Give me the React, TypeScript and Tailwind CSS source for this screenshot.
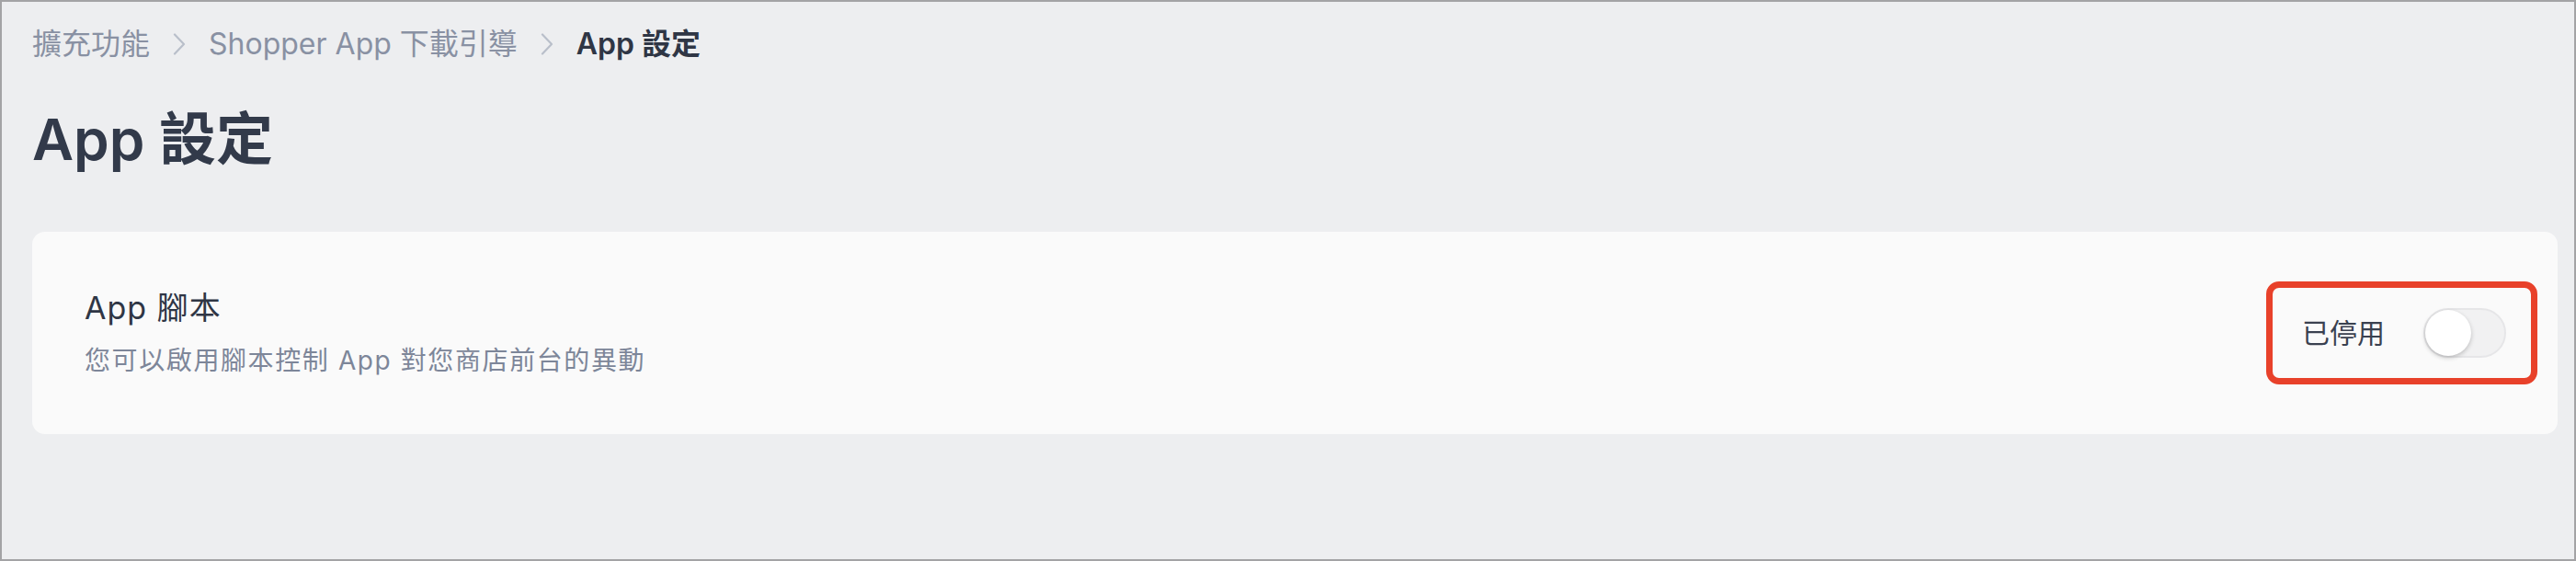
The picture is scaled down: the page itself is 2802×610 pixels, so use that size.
/**
 * App settings page - breadcrumb, page title and the script toggle card
 */
const font = { fontFamily: '"Inter", "Noto Sans CJK TC", sans-serif' };

const crumbs = ['擴充功能', 'Shopper App 下載引導'];

const Chevron = () => (
  <svg width="14" height="24" viewBox="0 0 14 24" className="mx-[25px] text-[#b9bfca]" fill="none">
    <polyline points="2,1.5 12,12 2,22.5" stroke="currentColor" strokeWidth="2.2" strokeLinecap="round" strokeLinejoin="round" />
  </svg>
);

const Toggle = ({ on }: { on: boolean }) => (
  <div
    className={`relative w-[90px] h-[54px] rounded-full border-2 ${
      on ? 'bg-[#2f6fed] border-[#2f6fed]' : 'bg-[#f1f1f2] border-[#e6e6e8]'
    }`}
  >
    <div className="absolute left-0 top-0 w-[50px] h-[50px] rounded-full bg-white shadow-[0_2px_5px_rgba(0,0,0,0.22)]" />
  </div>
);

export default function App() {
  return (
    <div
      className="w-full h-[610px] bg-[#edeef0] border-2 border-[#a3a3a5] pl-[33px] pr-[18px] pt-[26px]"
      style={font}
    >
      {/* Breadcrumb */}
      <nav className="flex items-center h-[40px] text-[32px] leading-[40px]">
        {crumbs.map((c) => (
          <div key={c} className="flex items-center">
            <span className="text-[#8991a3]">{c}</span>
            <Chevron />
          </div>
        ))}
        <span className="text-[#2f3645] font-semibold">App 設定</span>
      </nav>

      {/* Page title */}
      <h1 className="mt-[48px] text-[62px] leading-[72px] font-semibold text-[#323a4a]">App 設定</h1>

      {/* Settings card */}
      <div className="mt-[64px] h-[220px] rounded-[14px] bg-[#fafafa] flex items-center justify-between pl-[57px] pr-[22px]">
        <div className="flex flex-col gap-[15px]">
          <div className="text-[34px] leading-[44px] text-[#2f3645] tracking-[1px]">App 腳本</div>
          <div className="text-[28px] leading-[40px] text-[#7d8699] tracking-[1.6px]">
            您可以啟用腳本控制 App 對您商店前台的異動
          </div>
        </div>

        <div className="flex items-center gap-[42px] border-[7px] border-[#e8412a] rounded-[14px] pl-[32px] pr-[27px] py-[22px]">
          <span className="text-[30px] leading-[40px] text-[#3a4150]">已停用</span>
          <Toggle on={false} />
        </div>
      </div>
    </div>
  );
}
